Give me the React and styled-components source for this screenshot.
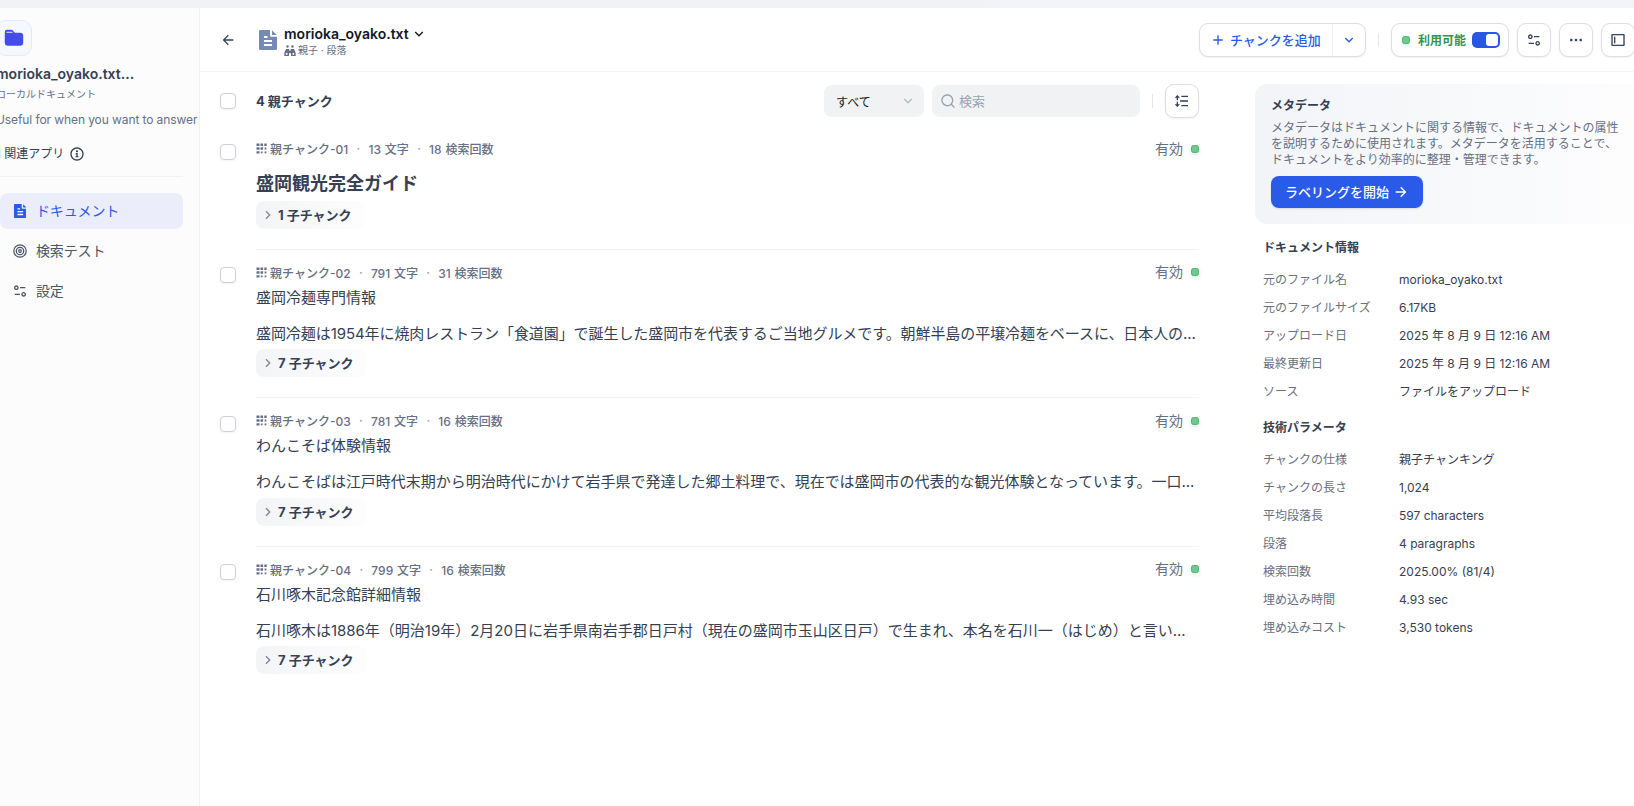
import React, { useState } from 'react';
import styled, { createGlobalStyle, css } from 'styled-components';
import {
    RiAddLine,
    RiArrowDownSLine,
    RiArrowLeftLine,
    RiArrowRightLine,
    RiArrowRightSLine,
    RiEqualizer2Line,
    RiInformation2Line,
    RiLayoutLeft2Line,
    RiLineHeight,
    RiMoreFill,
    RiSearchLine,
} from 'react-icons/ri';

const GlobalStyle = createGlobalStyle`
    * {
        box-sizing: border-box;
    }
    body {
        margin: 0;
        overflow: hidden;
        background: #f2f4f9;
        color: #354052;
        font-family: Inter, 'Noto Sans CJK JP', sans-serif;
        font-size: 12px;
    }
    button, input {
        font-family: inherit;
    }
    svg {
        display: block;
        flex-shrink: 0;
    }
`;

const chunks = [
    { id: '01', chars: 13, hits: 18, heading: '盛岡観光完全ガイド', children: 1 },
    {
        id: '02',
        chars: 791,
        hits: 31,
        title: '盛岡冷麺専門情報',
        text: '盛岡冷麺は1954年に焼肉レストラン「食道園」で誕生した盛岡市を代表するご当地グルメです。朝鮮半島の平壌冷麺をベースに、日本人の...',
        spacing: '-0.07px',
        children: 7,
    },
    {
        id: '03',
        chars: 781,
        hits: 16,
        title: 'わんこそば体験情報',
        text: 'わんこそばは江戸時代末期から明治時代にかけて岩手県で発達した郷土料理で、現在では盛岡市の代表的な観光体験となっています。一口...',
        spacing: '-0.02px',
        children: 7,
    },
    {
        id: '04',
        chars: 799,
        hits: 16,
        title: '石川啄木記念館詳細情報',
        text: '石川啄木は1886年（明治19年）2月20日に岩手県南岩手郡日戸村（現在の盛岡市玉山区日戸）で生まれ、本名を石川一（はじめ）と言い...',
        spacing: '-0.01px',
        children: 7,
    },
];

const documentInfo = [
    ['元のファイル名', 'morioka_oyako.txt'],
    ['元のファイルサイズ', '6.17KB'],
    ['アップロード日', '2025 年 8 月 9 日 12:16 AM'],
    ['最終更新日', '2025 年 8 月 9 日 12:16 AM'],
    ['ソース', 'ファイルをアップロード'],
];

const technicalInfo = [
    ['チャンクの仕様', '親子チャンキング'],
    ['チャンクの長さ', '1,024'],
    ['平均段落長', '597 characters'],
    ['段落', '4 paragraphs'],
    ['検索回数', '2025.00% (81/4)'],
    ['埋め込み時間', '4.93 sec'],
    ['埋め込みコスト', '3,530 tokens'],
];

const FolderIcon = () => (
    <svg width="20" height="18" viewBox="0 0 20 18">
        <path d="M.8 5V3A2.2 2.2 0 0 1 3 .8h4.2c.8 0 1.4.3 1.9.9l1.7 2.1H16A3.2 3.2 0 0 1 19.2 7v6.5a3.2 3.2 0 0 1-3.2 3.2H4a3.2 3.2 0 0 1-3.2-3.2z" fill="#444ce7" />
        <path d="M2.5 3.3h6" stroke="#dfe3fb" strokeWidth="1.1" />
    </svg>
);

const DocIcon = ({ size, color }) => (
    <svg width={size * 0.9} height={size} viewBox="0 0 18 20">
        <path d="M1.2 0H11v5.2c0 .9.7 1.6 1.6 1.6H18v12a1.2 1.2 0 0 1-1.2 1.2H1.2A1.2 1.2 0 0 1 0 18.8V1.2A1.2 1.2 0 0 1 1.2 0z" fill={color} />
        <path d="M13 .3 17.7 5H13z" fill={color} />
        <path d="M5 7h3.5M5 11h8M5 15h8" stroke="#fff" strokeWidth="1.8" />
    </svg>
);

const TargetIcon = () => (
    <svg width="14" height="14" viewBox="0 0 14 14" fill="none" stroke="#495464" strokeWidth="1.25">
        <circle cx="7" cy="7" r="6.2" />
        <circle cx="7" cy="7" r="3.7" />
        <circle cx="7" cy="7" r="1.3" />
    </svg>
);

const FamilyIcon = () => (
    <svg width="12" height="12" viewBox="0 0 12 12" fill="#676f83">
        <circle cx="3.5" cy="1.5" r="1.2" />
        <circle cx="8.5" cy="1.5" r="1.2" />
        <path d="M2.6 4h1.8c.7 0 1 .4 1 1v.7h1.200V5c0-.6.3-1 1-1h1.8c.7 0 1 .5 1.100 1.100l1.200 3V11H7V8.200H5V11H.3V8.100l1.200-3C1.600 4.500 1.900 4 2.600 4z" />
        <path d="M1.800 9.800V8h1.700v1.800zM8.500 9.800V8h1.700v1.800z" fill="#fff" />
    </svg>
);

/* 3x3 blocks, the last column and row fade out in size */
const GridIcon = () => (
    <svg width="11" height="11" viewBox="0 0 11 11" fill="#676f83">
        <path d="M.5.5h3V3h-3zM4.5.5h2.6V3H4.5zM8.3.5h2.4V3H8.3zM.5 4.3h3v2.5h-3zM4.5 4.3h2.6v2.5H4.5zM8.6 4.6h1.8v1.8H8.6zM.5 8.2h3v2.4h-3zM4.8 8.4h1.8v1.8H4.8zM8.6 8.4h1.8v1.8H8.6z" />
    </svg>
);

const App = () => {
    const [enabled, setEnabled] = useState(true);
    const [query, setQuery] = useState('');

    return (
        <>
            <GlobalStyle />
            <TopShade />
            <Shell>
                <Sidebar>
                    <DatasetHead>
                        <FolderBox>
                            <FolderIcon />
                        </FolderBox>
                        <DatasetName>morioka_oyako.txt...</DatasetName>
                        <DatasetType>ローカルドキュメント</DatasetType>
                        <DatasetText>Useful for when you want to answer</DatasetText>
                        <Related>
                            1 関連アプリ
                            <RiInformation2Line size={16} />
                        </Related>
                    </DatasetHead>
                    <Nav>
                        <NavItem $active>
                            <NavIcon>
                                <DocIcon size={14} color="#2a5ae8" />
                            </NavIcon>
                            <span>ドキュメント</span>
                        </NavItem>
                        <NavItem>
                            <NavIcon>
                                <TargetIcon />
                            </NavIcon>
                            <span>検索テスト</span>
                        </NavItem>
                        <NavItem>
                            <NavIcon>
                                <RiEqualizer2Line size={16} />
                            </NavIcon>
                            <span>設定</span>
                        </NavItem>
                    </Nav>
                </Sidebar>

                <Main>
                    <Header>
                        <BackButton>
                            <RiArrowLeftLine size={16} />
                        </BackButton>
                        <DocIcon size={20} color="#758ab5" />
                        <FileInfo>
                            <FileName>
                                morioka_oyako.txt
                                <RiArrowDownSLine size={16} />
                            </FileName>
                            <FileMode>
                                <FamilyIcon />
                                親子 · 段落
                            </FileMode>
                        </FileInfo>
                        <AddGroup>
                            <AddButton>
                                <RiAddLine size={16} />
                                チャンクを追加
                            </AddButton>
                            <AddMore>
                                <RiArrowDownSLine size={16} />
                            </AddMore>
                        </AddGroup>
                        <Rule $space="12px" />
                        <StatusBox>
                            <Dot />
                            <StatusText>利用可能</StatusText>
                            <Toggle $on={enabled} onClick={() => setEnabled(!enabled)}>
                                <Knob />
                            </Toggle>
                        </StatusBox>
                        <IconButton>
                            <RiEqualizer2Line size={16} />
                        </IconButton>
                        <IconButton>
                            <RiMoreFill size={16} />
                        </IconButton>
                        <IconButton>
                            <RiLayoutLeft2Line size={16} />
                        </IconButton>
                    </Header>

                    <Content>
                        <ChunkColumn>
                            <Toolbar>
                                <Checkbox />
                                <Total>4 親チャンク</Total>
                                <Select>
                                    すべて
                                    <RiArrowDownSLine size={16} />
                                </Select>
                                <Search>
                                    <RiSearchLine size={16} />
                                    <SearchInput placeholder="検索" value={query} onChange={e => setQuery(e.target.value)} />
                                </Search>
                                <Rule $space="12px" />
                                <IconButton>
                                    <RiLineHeight size={16} />
                                </IconButton>
                            </Toolbar>
                            {chunks.map(chunk => (
                                <ChunkRow key={chunk.id}>
                                    <Checkbox $row />
                                    <ChunkBody>
                                        <Meta>
                                            <GridIcon />
                                            <span>親チャンク-{chunk.id}</span>
                                            <Separator>·</Separator>
                                            <span>{chunk.chars} 文字</span>
                                            <Separator>·</Separator>
                                            <span>{chunk.hits} 検索回数</span>
                                            <Enabled>
                                                有効
                                                <Dot />
                                            </Enabled>
                                        </Meta>
                                        {chunk.heading && <ChunkHeading>{chunk.heading}</ChunkHeading>}
                                        {chunk.title && <ChunkTitle>{chunk.title}</ChunkTitle>}
                                        {chunk.text && <ChunkText $spacing={chunk.spacing}>{chunk.text}</ChunkText>}
                                        <ChildChip>
                                            <RiArrowRightSLine size={16} />
                                            <span>{chunk.children} 子チャンク</span>
                                        </ChildChip>
                                    </ChunkBody>
                                </ChunkRow>
                            ))}
                        </ChunkColumn>

                        <Aside>
                            <MetaCard>
                                <CardTitle>メタデータ</CardTitle>
                                <CardText>
                                    メタデータはドキュメントに関する情報で、ドキュメントの属性を説明するために使用されます。メタデータを活用することで、ドキュメントをより効率的に整理・管理できます。
                                </CardText>
                                <PrimaryButton>
                                    <span>ラベリングを開始</span>
                                    <RiArrowRightLine size={16} />
                                </PrimaryButton>
                            </MetaCard>
                            <InfoTitle>ドキュメント情報</InfoTitle>
                            <InfoList>
                                {documentInfo.map(([label, value]) => (
                                    <InfoRow key={label}>
                                        <InfoLabel>{label}</InfoLabel>
                                        <span>{value}</span>
                                    </InfoRow>
                                ))}
                            </InfoList>
                            <InfoTitle>技術パラメータ</InfoTitle>
                            <InfoList>
                                {technicalInfo.map(([label, value]) => (
                                    <InfoRow key={label}>
                                        <InfoLabel>{label}</InfoLabel>
                                        <span>{value}</span>
                                    </InfoRow>
                                ))}
                            </InfoList>
                        </Aside>
                    </Content>
                </Main>
            </Shell>
        </>
    );
};

const TopShade = styled.div`
    height: 8px;
    background: linear-gradient(90deg, #f1f2f6 0, #f1f2f6 980px, #f2f4f9 1010px);
`;

/* the whole view is scrolled 16px to the right */
const Shell = styled.div`
    display: flex;
    width: 1660px;
    height: calc(100vh - 8px);
    margin-left: -16px;
`;

const Sidebar = styled.aside`
    flex: 0 0 216px;
    min-width: 0;
    padding: 12px 16px 0;
    background: #fcfcfd;
    border-right: 1px solid #eff0f3;
`;

const DatasetHead = styled.div`
    height: 157px;
    border-bottom: 1px solid #f0f1f4;
    white-space: nowrap;

    > * {
        margin-left: -4px;
    }
`;

const FolderBox = styled.div`
    display: flex;
    align-items: center;
    justify-content: center;
    width: 36px;
    height: 36px;
    background: #f5f8ff;
    border: 1px solid #e0eaff;
    border-radius: 10px;
`;

const DatasetName = styled.div`
    margin-top: 8px;
    font-size: 14px;
    font-weight: 600;
    line-height: 20px;
`;

const DatasetType = styled.div`
    font-size: 10px;
    line-height: 20px;
    color: #676f83;
`;

const DatasetText = styled.div`
    margin-top: 6px;
    font-size: 12px;
    line-height: 20px;
    letter-spacing: -0.09px;
    color: #676f83;
`;

const Related = styled.div`
    display: flex;
    align-items: center;
    gap: 5px;
    margin-top: 14px;
    line-height: 20px;
`;

const Nav = styled.nav`
    display: flex;
    flex-direction: column;
    gap: 4px;
    margin-top: 16px;
`;

const NavItem = styled.div`
    display: flex;
    align-items: center;
    height: 36px;
    padding-left: 12px;
    background: ${({ $active }) => ($active ? '#ecedfb' : 'transparent')};
    border-radius: 8px;
    font-size: 14px;
    line-height: 20px;
    color: ${({ $active }) => ($active ? '#2a5ae8' : '#495464')};

    span {
        padding-bottom: 1px;
        letter-spacing: -0.15px;
    }
`;

const NavIcon = styled.div`
    display: flex;
    justify-content: center;
    width: 16px;
    margin-right: 8px;
`;

const Main = styled.main`
    flex: 1;
    display: flex;
    flex-direction: column;
    min-width: 0;
    background: #fff;
`;

const Header = styled.header`
    display: flex;
    align-items: center;
    height: 64px;
    padding: 0 9px 0 20px;
    border-bottom: 1px solid #f2f3f5;
`;

const BackButton = styled.div`
    display: flex;
    width: 39px;
`;

const FileInfo = styled.div`
    flex: 1;
    padding: 4px 0 0 7px;
`;

const FileName = styled.div`
    display: flex;
    align-items: center;
    gap: 2px;
    font-size: 14px;
    font-weight: 600;
    line-height: 18px;
    color: #101828;
`;

const FileMode = styled.div`
    display: flex;
    align-items: center;
    gap: 2px;
    font-size: 10px;
    line-height: 15px;
    color: #676f83;
`;

const buttonFrame = css`
    height: 34px;
    background: #fff;
    border: 1px solid #dcdee3;
    border-radius: 9px;
    box-shadow: 0 1px 2px rgba(16, 24, 40, 0.06);
`;

const AddGroup = styled.div`
    ${buttonFrame}
    display: flex;
    width: 167px;
    color: #2a5ae8;
`;

const AddButton = styled.div`
    flex: 1;
    display: flex;
    align-items: center;
    gap: 4px;
    padding-left: 10px;
    font-size: 13px;
    font-weight: 500;
`;

const AddMore = styled.div`
    display: flex;
    align-items: center;
    justify-content: center;
    width: 33px;
    border-left: 1px solid #eceef1;
`;

const Rule = styled.div`
    width: 1px;
    height: 14px;
    margin: 0 ${({ $space }) => $space};
    background: #e3e5e9;
`;

const StatusBox = styled.div`
    ${buttonFrame}
    display: flex;
    align-items: center;
    width: 118px;
    padding-left: 10px;
`;

const Dot = styled.span`
    width: 8px;
    height: 8px;
    background: #6fc98c;
    border: 1px solid #4fb572;
    border-radius: 2.5px;
    box-shadow: 0 2px 4px rgba(23, 178, 106, 0.2);
`;

const StatusText = styled.span`
    margin: 0 6px 0 8px;
    padding-bottom: 1px;
    font-weight: 700;
    color: #35924f;
`;

const Toggle = styled.div`
    display: flex;
    align-items: center;
    justify-content: ${({ $on }) => ($on ? 'flex-end' : 'flex-start')};
    width: 28px;
    height: 16px;
    padding: 0 2px;
    background: ${({ $on }) => ($on ? '#2a56e4' : '#d0d5dd')};
    border-radius: 5px;
`;

const Knob = styled.span`
    width: 12px;
    height: 12px;
    background: #fff;
    border-radius: 3px;
`;

const IconButton = styled.div`
    ${buttonFrame}
    display: flex;
    flex: 0 0 34px;
    align-items: center;
    justify-content: center;
    color: #354052;

    ${Header} & {
        margin-left: 8px;
    }
`;

const Content = styled.div`
    display: flex;
    flex: 1;
`;

const ChunkColumn = styled.section`
    width: 999px;
    padding: 12px 0 0 20px;
`;

const Toolbar = styled.div`
    display: flex;
    align-items: center;
    height: 34px;
    margin-bottom: 8px;
`;

const Checkbox = styled.div`
    flex: 0 0 16px;
    height: 16px;
    margin-right: 20px;
    margin-top: ${({ $row }) => ($row ? '17.5px' : '0')};
    background: #fff;
    border: 1px solid #cdd1dc;
    border-radius: 4px;
    box-shadow: 0 1px 2px rgba(16, 24, 40, 0.05);
`;

const Total = styled.div`
    flex: 1;
    padding-bottom: 2px;
    font-size: 13px;
    font-weight: 700;
`;

const Select = styled.div`
    display: flex;
    align-items: center;
    justify-content: space-between;
    width: 100px;
    height: 32px;
    padding: 0 8px 0 12px;
    background: #f1f2f4;
    border-radius: 8px;
    color: #101828;

    svg {
        color: #b4bac4;
    }
`;

const Search = styled.div`
    display: flex;
    align-items: center;
    gap: 3px;
    width: 208px;
    height: 32px;
    margin-left: 8px;
    padding: 0 8px;
    background: #f1f2f4;
    border-radius: 8px;
    color: #98a2b2;
`;

const SearchInput = styled.input`
    width: 160px;
    padding: 0;
    border: 0;
    outline: 0;
    background: none;
    font-size: 13px;
    color: #354052;

    &::placeholder {
        color: #98a2b2;
    }
`;

const ChunkRow = styled.div`
    display: flex;
`;

const ChunkBody = styled.div`
    flex: 1;
    min-width: 0;
    padding: 12.5px 0 20px;
    border-bottom: 1px solid #f2f3f5;

    ${ChunkRow}:last-child & {
        border-bottom: 0;
    }
`;

const Meta = styled.div`
    display: flex;
    align-items: center;
    height: 20px;
    font-weight: 500;
    word-spacing: 0.6px;
    color: #676f83;

    svg {
        margin-right: 3px;
    }
`;

const Separator = styled.span`
    width: 20.3px;
    text-align: center;
    color: #98a2b2;
`;

const Enabled = styled.div`
    display: flex;
    align-items: center;
    gap: 8px;
    margin-left: auto;
    font-size: 14px;
    font-weight: 400;
    line-height: 20px;
`;

const ChunkHeading = styled.div`
    margin: 11.5px 0 2.5px;
    font-size: 18px;
    font-weight: 700;
    line-height: 28px;
`;

const ChunkTitle = styled.div`
    margin-top: 3.5px;
    font-size: 15px;
    line-height: 24px;
`;

const ChunkText = styled.div`
    margin: 12px 0 3.5px;
    font-size: 15px;
    line-height: 24px;
    letter-spacing: ${({ $spacing }) => $spacing};
    white-space: nowrap;
`;

const ChildChip = styled.div`
    display: inline-flex;
    align-items: center;
    gap: 2px;
    height: 28px;
    padding: 0 13px 0 4px;
    vertical-align: top;
    background: linear-gradient(90deg, #f3f4f6, #fdfdfe);
    border-radius: 8px;
    font-size: 13px;
    font-weight: 700;

    svg {
        color: #7d8698;
    }

    span {
        padding-bottom: 1px;
    }
`;

const Aside = styled.aside`
    flex: 1;
    padding: 12px 0 0 56px;
`;

const MetaCard = styled.div`
    height: 140px;
    margin-bottom: 14px;
    padding: 13px 0 0 16px;
    background: linear-gradient(90deg, #f2f4f7, #fdfdfe);
    border-radius: 12px;
`;

const CardTitle = styled.div`
    font-weight: 700;
    line-height: 18px;
`;

const CardText = styled.p`
    width: 350px;
    margin: 5px 0 8px;
    line-height: 16px;
    color: #676f83;
`;

const PrimaryButton = styled.div`
    display: flex;
    align-items: center;
    gap: 4px;
    width: 152px;
    height: 32px;
    padding-left: 14px;
    background: #2a5ae8;
    border-radius: 8px;
    box-shadow: 0 1px 2px rgba(16, 24, 40, 0.12);
    font-size: 13px;
    font-weight: 500;
    color: #fff;

    span {
        padding-bottom: 1px;
    }
`;

const InfoTitle = styled.div`
    padding-left: 8px;
    font-weight: 700;
    line-height: 20px;
`;

const InfoList = styled.div`
    margin: 8px 0 12px 8px;
`;

const InfoRow = styled.div`
    display: flex;
    height: 28px;
    line-height: 28px;
`;

const InfoLabel = styled.span`
    width: 136px;
    color: #676f83;
`;

export default App;
